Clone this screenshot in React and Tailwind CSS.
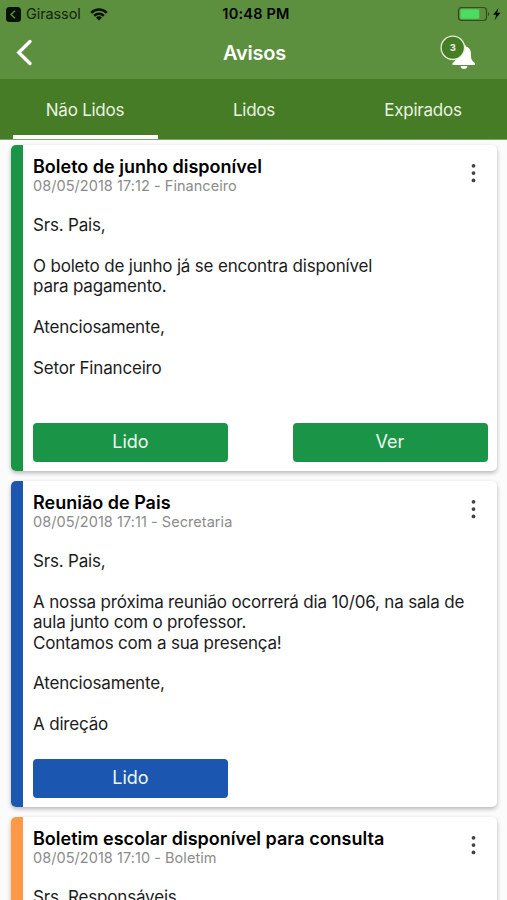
import { useState } from "react";

const avisos = [
  {
    id: 1,
    titulo: "Boleto de junho disponível",
    data: "08/05/2018 17:12 - Financeiro",
    linhas: [
      "Srs. Pais,",
      "",
      "O boleto de junho já se encontra disponível",
      "para pagamento.",
      "",
      "Atenciosamente,",
      "",
      "Setor Financeiro",
    ],
    cor: "bg-[#1a9547]",
    botoes: ["Lido", "Ver"],
  },
  {
    id: 2,
    titulo: "Reunião de Pais",
    data: "08/05/2018 17:11 - Secretaria",
    linhas: [
      "Srs. Pais,",
      "",
      "A nossa próxima reunião ocorrerá dia 10/06, na sala de",
      "aula junto com o professor.",
      "Contamos com a sua presença!",
      "",
      "Atenciosamente,",
      "",
      "A direção",
    ],
    cor: "bg-[#1b57b0]",
    botoes: ["Lido"],
  },
  {
    id: 3,
    titulo: "Boletim escolar disponível para consulta",
    data: "08/05/2018 17:10 - Boletim",
    linhas: ["Srs. Responsáveis,"],
    cor: "bg-[#ff9945]",
    botoes: ["Lido"],
  },
];

const abas = ["Não Lidos", "Lidos", "Expirados"];

function StatusBar() {
  return (
    <div className="grid h-7 grid-cols-3 items-center pl-[6px] pr-[4px] text-black">
      <div className="flex items-center">
        <svg width="15" height="15" viewBox="0 0 15 15" fill="none">
          <rect width="15" height="15" rx="3.5" fill="#081203" />
          <path d="M9 3.8 5 7.5l4 3.7" stroke="#5c8f3e" strokeWidth="1.5" />
        </svg>
        <span className="ml-[5px] text-[14.5px] leading-7 tracking-[-0.1px] text-[#14250b]">Girassol</span>
        <svg className="ml-[9px]" width="18" height="13" viewBox="0 0 18 13" fill="none" stroke="#081203" strokeWidth="2.4">
          <path d="M1.2 4.8a11 11 0 0 1 15.6 0" />
          <path d="M4.1 7.8a6.9 6.9 0 0 1 9.8 0" />
          <path d="M9 12.6 6 9.6a4.2 4.2 0 0 1 6 0z" fill="#081203" stroke="none" />
        </svg>
      </div>
      <span className="pl-[3px] text-center text-[14.5px] font-semibold tracking-[0.2px]">10:48 PM</span>
      <div className="flex items-center justify-end">
        <svg width="46" height="16" viewBox="0 0 46 16" fill="none">
          <rect x="1.5" y="1.5" width="28" height="13" rx="3" stroke="#304d20" strokeWidth="1.2" />
          <rect x="3.3" y="3.3" width="19" height="9.4" rx="1" fill="#4bdc60" />
          <path d="M31 6c1.6.5 1.6 3.5 0 4z" fill="#304d20" />
          <path d="m41.5 2-5.3 6.8h3.2L37.6 14l5.8-7.2h-3.3z" fill="#000" />
        </svg>
      </div>
    </div>
  );
}

function Header() {
  return (
    <header className="h-[79px] shrink-0 bg-[#5c8f3e]">
      <StatusBar />
      <div className="grid h-[49px] grid-cols-3 items-center">
        <button type="button" className="ml-[15px] w-5" aria-label="Voltar">
          <svg width="20" height="28" viewBox="0 0 20 28" fill="none">
            <path d="M15 2.5 3.8 13.5 15 24.5" stroke="#fff" strokeWidth="3.4" strokeLinecap="round" />
          </svg>
        </button>
        <h1 className="pl-[2px] text-center text-xl font-semibold tracking-[-0.2px] text-white">Avisos</h1>
        <button type="button" className="mr-[30px] justify-self-end" aria-label="Notificações">
          <svg width="37" height="36" viewBox="0 0 37 36">
            <path
              d="M24 9.5c1.5 0 2 1 2 2 3.8 1.2 5 4 5 8 0 4.5.8 6.5 4 8.5v2H12.5v-2c3-2 4.2-4 4.2-8.500 0-4 1.6-6.8 5.3-8 0-1 .5-2 2-2z"
              fill="#fff"
            />
            <path d="M20.5 31h7c-.3 4-6.7 4-7 0z" fill="#fff" />
            <circle cx="12.8" cy="12.8" r="11.7" fill="#487d27" stroke="#e5f2da" strokeWidth="1.3" />
            <text x="12.8" y="16.2" textAnchor="middle" fontSize="9.5" fontWeight="700" fill="#e5f2da">
              3
            </text>
          </svg>
        </button>
      </div>
    </header>
  );
}

function Tabs() {
  const [ativa, setAtiva] = useState(0);

  return (
    <nav className="grid h-[61px] shrink-0 grid-cols-3 border-b border-[#7fa568] bg-[#467c25]">
      {abas.map((aba, i) => (
        <button
          key={aba}
          type="button"
          onClick={() => setAtiva(i)}
          className="flex flex-col items-center text-[17px] tracking-[-0.25px] text-[#e9f3e3]"
        >
          <span className="flex h-14 items-center pt-[8px] pl-px">{aba}</span>
          {ativa === i && <span className="ml-[2px] h-[4px] w-[145px] bg-white" />}
        </button>
      ))}
    </nav>
  );
}

function Aviso({ aviso }) {
  return (
    <article className="flex h-[326px] shrink-0 overflow-hidden rounded-[5px] bg-white shadow-[0_2px_4px_rgba(0,0,0,0.28)]">
      <div className={`w-3 shrink-0 ${aviso.cor}`} />
      <div className="flex grow flex-col pt-[11px] pr-[9.5px] pb-[9.5px] pl-[10px]">
        <div className="flex justify-between">
          <div>
            <h2 className="text-[18px] leading-[22px] font-semibold text-black">{aviso.titulo}</h2>
            <p className="-mt-px text-[14.5px] leading-[17px] tracking-[0.05px] text-[#8b8b8b]">{aviso.data}</p>
          </div>
          <button type="button" className="mt-[7px] mr-[12px] self-start" aria-label="Opções">
            <svg width="6" height="20" viewBox="0 0 6 20" fill="#444">
              <circle cx="3.5" cy="2.8" r="1.9" />
              <circle cx="3.5" cy="10.1" r="1.9" />
              <circle cx="3.5" cy="17.4" r="1.9" />
            </svg>
          </button>
        </div>
        <div className="mt-[21px] text-[17px] leading-[20.4px] tracking-[-0.18px] whitespace-nowrap text-[#1c1c1c]">
          {aviso.linhas.map((linha, i) => (
            <p key={i} className="h-[20.4px]">
              {linha}
            </p>
          ))}
        </div>
        <div className="mt-auto flex justify-between">
          {aviso.botoes.map((botao) => (
            <button
              key={botao}
              type="button"
              className={`h-[39px] w-[195px] rounded-[4px] text-lg text-[#eef6f0] ${aviso.cor}`}
            >
              {botao}
            </button>
          ))}
        </div>
      </div>
    </article>
  );
}

export default function App() {
  return (
    <div className="flex h-[900px] w-[507px] flex-col overflow-hidden bg-white font-[Inter,sans-serif]">
      <Header />
      <Tabs />
      <main className="flex min-h-0 grow flex-col gap-[10px] overflow-hidden bg-[#fbfbfb] pt-[5px] pr-[10px] pl-[11px]">
        {avisos.map((aviso) => (
          <Aviso key={aviso.id} aviso={aviso} />
        ))}
      </main>
    </div>
  );
}
